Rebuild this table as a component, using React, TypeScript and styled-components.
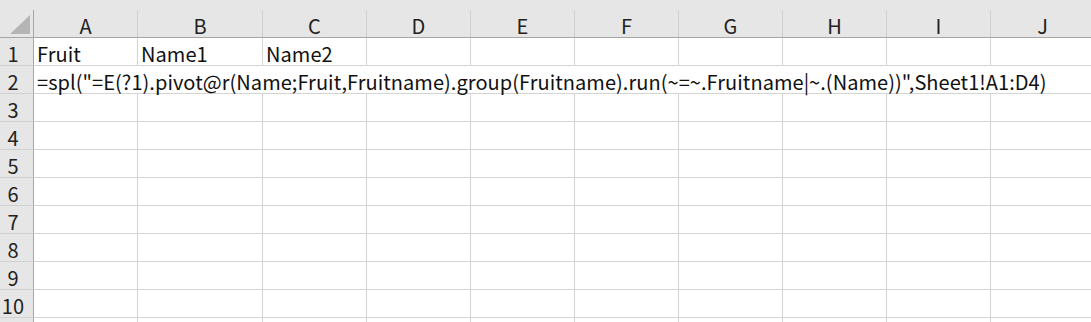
import React from "react";
import styled, { createGlobalStyle } from "styled-components";

const columns = [
  { key: "A", width: 104 },
  { key: "B", width: 125 },
  { key: "C", width: 104 },
  { key: "D", width: 104 },
  { key: "E", width: 104 },
  { key: "F", width: 104 },
  { key: "G", width: 104 },
  { key: "H", width: 104 },
  { key: "I", width: 104 },
  { key: "J", width: 104 }
];

const rows: { id: number; cells: string[]; spill?: boolean }[] = [
  { id: 1, cells: ["Fruit", "Name1", "Name2"] },
  {
    id: 2,
    cells: [
      '=spl("=E(?1).pivot@r(Name;Fruit,Fruitname).group(Fruitname).run(~=~.Fruitname|~.(Name))",Sheet1!A1:D4)'
    ],
    spill: true
  },
  { id: 3, cells: [] },
  { id: 4, cells: [] },
  { id: 5, cells: [] },
  { id: 6, cells: [] },
  { id: 7, cells: [] },
  { id: 8, cells: [] },
  { id: 9, cells: [] },
  { id: 10, cells: [] }
];

const template = `34px ${columns.map((c) => c.width + "px").join(" ")}`;

const App = () => {
  return (
    <Sheet>
      <GlobalStyle />
      <HeaderBar>
        <Corner>
          <CornerMark />
        </Corner>
        {columns.map((c) => (
          <ColHead key={c.key}>{c.key}</ColHead>
        ))}
      </HeaderBar>
      {rows.map((r) => (
        <Row key={r.id}>
          <RowHead>{r.id}</RowHead>
          {r.spill ? (
            <Cell $span={columns.length}>{r.cells[0]}</Cell>
          ) : (
            columns.map((c, i) => <Cell key={c.key}>{r.cells[i] || ""}</Cell>)
          )}
        </Row>
      ))}
      {/* partly visible next row at the bottom edge */}
      <Row>
        <RowHead />
        {columns.map((c) => (
          <Cell key={c.key} />
        ))}
      </Row>
    </Sheet>
  );
};

export default App;

const GlobalStyle = createGlobalStyle`
  html, body {
    margin: 0;
    padding: 0;
    background: #ffffff;
    overflow: hidden;
  }
`;

const Sheet = styled.div`
  width: 1091px;
  height: 322px;
  overflow: hidden;
  font-family: "Noto Sans CJK SC", "Noto Sans", sans-serif;
  font-size: 20px;
  letter-spacing: 0.05px;
  color: #111;
`;

const HeaderBar = styled.div`
  display: grid;
  grid-template-columns: ${template};
  width: max-content;
  padding-top: 10px;
  background: #e6e6e6;
  border-bottom: 1px solid #a6a6a6;
`;

const Corner = styled.div`
  position: relative;
  height: 27px;
  border-right: 1px solid #a6a6a6;
`;

const CornerMark = styled.div`
  position: absolute;
  right: 3px;
  bottom: 3px;
  width: 0;
  height: 0;
  border-left: 20px solid transparent;
  border-bottom: 19px solid #b5b5b5;
`;

const ColHead = styled.div`
  height: 27px;
  border-right: 1px solid #cfcfcf;
  display: flex;
  align-items: flex-end;
  justify-content: center;
  line-height: 23px;
  color: #222;
`;

const Row = styled.div`
  display: grid;
  grid-template-columns: ${template};
  width: max-content;
  height: 28px;
`;

const RowHead = styled.div`
  background: #e6e6e6;
  border-right: 1px solid #a6a6a6;
  border-bottom: 1px solid #d0d0d0;
  padding-right: 7px;
  display: flex;
  align-items: flex-end;
  justify-content: center;
  line-height: 23px;
  color: #222;
`;

const Cell = styled.div<{ $span?: number }>`
  grid-column: ${(p) => (p.$span ? `span ${p.$span}` : "auto")};
  border-right: ${(p) => (p.$span ? "none" : "1px solid #d4d4d4")};
  border-bottom: 1px solid #d4d4d4;
  padding-left: 3px;
  display: flex;
  align-items: flex-end;
  line-height: 23px;
  white-space: nowrap;
  overflow: visible;
`;
